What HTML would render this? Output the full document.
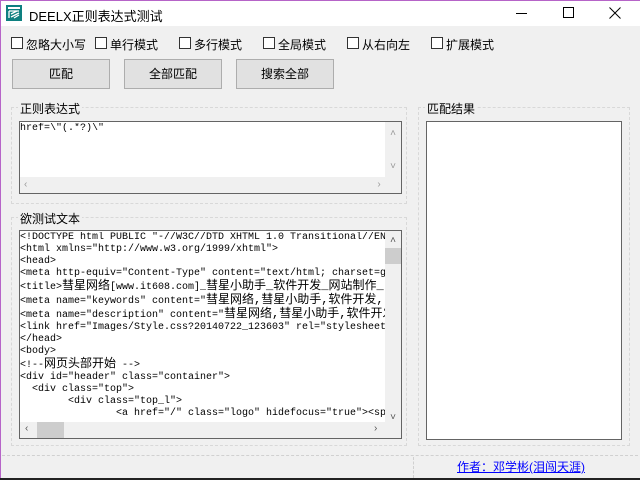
<!DOCTYPE html>
<html><head><meta charset="utf-8"><style>
*{margin:0;padding:0;box-sizing:border-box}
body{width:640px;height:480px;position:relative;background:#f0f0f0;font-family:"Liberation Sans","Noto Sans CJK SC",sans-serif;font-size:12px;color:#000;overflow:hidden}
.a{position:absolute}
.title{left:0;top:0;width:640px;height:26px;background:#fff;border-top:1px solid #b664c8}
.lb{left:0;top:0;width:1px;height:480px;background:#b664c8}
.bb{left:0;top:478px;width:640px;height:2px;background:#222}
.cb{width:12px;height:12px;border:1px solid #333;background:#fff;top:37px}
.cl{top:36px;font-size:12px}
.btn{top:59px;height:30px;width:98px;border:1px solid #adadad;background:#e1e1e1;text-align:center;line-height:28px}
.grp{border:1px dashed #d8d8d8}
.glab{background:#f0f0f0;padding:0 2px;font-size:12px}
.ed{background:#fff;border:1px solid #646464}
.mono{font-family:"Liberation Mono","Noto Sans CJK SC",monospace;font-size:10px;line-height:12px;white-space:pre;overflow:hidden;color:#000}
.sb{background:#f0f0f0;color:#999;font-size:10px;text-align:center}
</style></head><body>
<div class="a title"></div>
<div class="a lb"></div>
<svg class="a" style="left:6px;top:5px" width="16" height="16"><rect x="0" y="0" width="16" height="16" fill="#0e8080"/><rect x="2" y="2" width="12" height="2" fill="#fff"/><path d="M3 6h10M3 6v7M5 9l6-3M5 12l8-4M8 13l5-3" stroke="#fff" stroke-width="1.3" fill="none"/></svg>
<div class="a" style="left:29px;top:6px;font-size:13px">DEELX正则表达式测试</div>
<div class="a" style="left:516px;top:13px;width:11px;height:1px;background:#000"></div>
<div class="a" style="left:563px;top:7px;width:11px;height:11px;border:1px solid #000"></div>
<svg class="a" style="left:609px;top:7px" width="12" height="12"><path d="M0.5 0.5L11.5 11.5M11.5 0.5L0.5 11.5" stroke="#000"/></svg>

<div class="a cb" style="left:11px"></div><div class="a cl" style="left:26px">忽略大小写</div>
<div class="a cb" style="left:95px"></div><div class="a cl" style="left:110px">单行模式</div>
<div class="a cb" style="left:179px"></div><div class="a cl" style="left:194px">多行模式</div>
<div class="a cb" style="left:263px"></div><div class="a cl" style="left:278px">全局模式</div>
<div class="a cb" style="left:347px"></div><div class="a cl" style="left:362px">从右向左</div>
<div class="a cb" style="left:431px"></div><div class="a cl" style="left:446px">扩展模式</div>

<div class="a btn" style="left:12px">匹配</div>
<div class="a btn" style="left:124px">全部匹配</div>
<div class="a btn" style="left:236px">搜索全部</div>

<div class="a grp" style="left:11px;top:107px;width:396px;height:97px"></div>
<div class="a glab" style="left:18px;top:100px">正则表达式</div>
<div class="a ed" style="left:19px;top:121px;width:383px;height:73px"></div>
<div class="a mono" style="left:20px;top:123px">href=\"(.*?)\"</div>
<div class="a sb" style="left:385px;top:122px;width:16px;height:55px"><div style="margin-top:6px">˄</div><div style="margin-top:22px">˅</div></div>
<div class="a sb" style="left:20px;top:177px;width:381px;height:16px;line-height:16px;text-align:left"><span style="margin-left:4px">‹</span><span style="margin-left:350px">›</span></div>

<div class="a grp" style="left:11px;top:217px;width:396px;height:229px"></div>
<div class="a glab" style="left:18px;top:210px">欲测试文本</div>
<div class="a ed" style="left:19px;top:230px;width:383px;height:209px"></div>
<div class="a mono" style="left:20px;top:232px;width:365px;height:190px">&lt;!DOCTYPE html PUBLIC "-//W3C//DTD XHTML 1.0 Transitional//EN
&lt;html xmlns="http://www.w3.org/1999/xhtml"&gt;
&lt;head&gt;
&lt;meta http-equiv="Content-Type" content="text/html; charset=gb
&lt;title&gt;<span style="font-size:12px">彗星网络</span>[www.it608.com]_<span style="font-size:12px">彗星小助手_软件开发_网站制作_</span>
&lt;meta name="keywords" content="<span style="font-size:12px">彗星网络,彗星小助手,软件开发,</span>
&lt;meta name="description" content="<span style="font-size:12px">彗星网络,彗星小助手,软件开发</span>
&lt;link href="Images/Style.css?20140722_123603" rel="stylesheet
&lt;/head&gt;
&lt;body&gt;
&lt;!--<span style="font-size:12px">网页头部开始</span> --&gt;
&lt;div id="header" class="container"&gt;
  &lt;div class="top"&gt;
        &lt;div class="top_l"&gt;
                &lt;a href="/" class="logo" hidefocus="true"&gt;&lt;sp</div>
<div class="a sb" style="left:385px;top:231px;width:16px;height:191px"><div style="margin-top:4px;color:#555">˄</div><div style="margin-top:2px;height:16px;background:#cdcdcd"></div><div style="margin-top:148px;color:#555">˅</div></div>
<div class="a sb" style="left:20px;top:422px;width:381px;height:16px"><span class="a" style="left:5px;top:1px;color:#555">‹</span><div class="a" style="left:17px;top:0;width:27px;height:16px;background:#cdcdcd"></div><span class="a" style="left:354px;top:1px;color:#555">›</span></div>

<div class="a grp" style="left:418px;top:107px;width:212px;height:339px"></div>
<div class="a glab" style="left:425px;top:100px">匹配结果</div>
<div class="a ed" style="left:426px;top:121px;width:196px;height:319px"></div>

<div class="a" style="left:2px;top:455px;width:636px;border-top:1px dashed #d0d0d0"></div>
<div class="a" style="left:413px;top:457px;height:21px;border-left:1px dashed #d0d0d0"></div>
<div class="a" style="left:457px;top:458px;color:#00f;text-decoration:underline;font-size:12px">作者：邓学彬(泪闯天涯)</div>
<div class="a bb"></div>
</body></html>
